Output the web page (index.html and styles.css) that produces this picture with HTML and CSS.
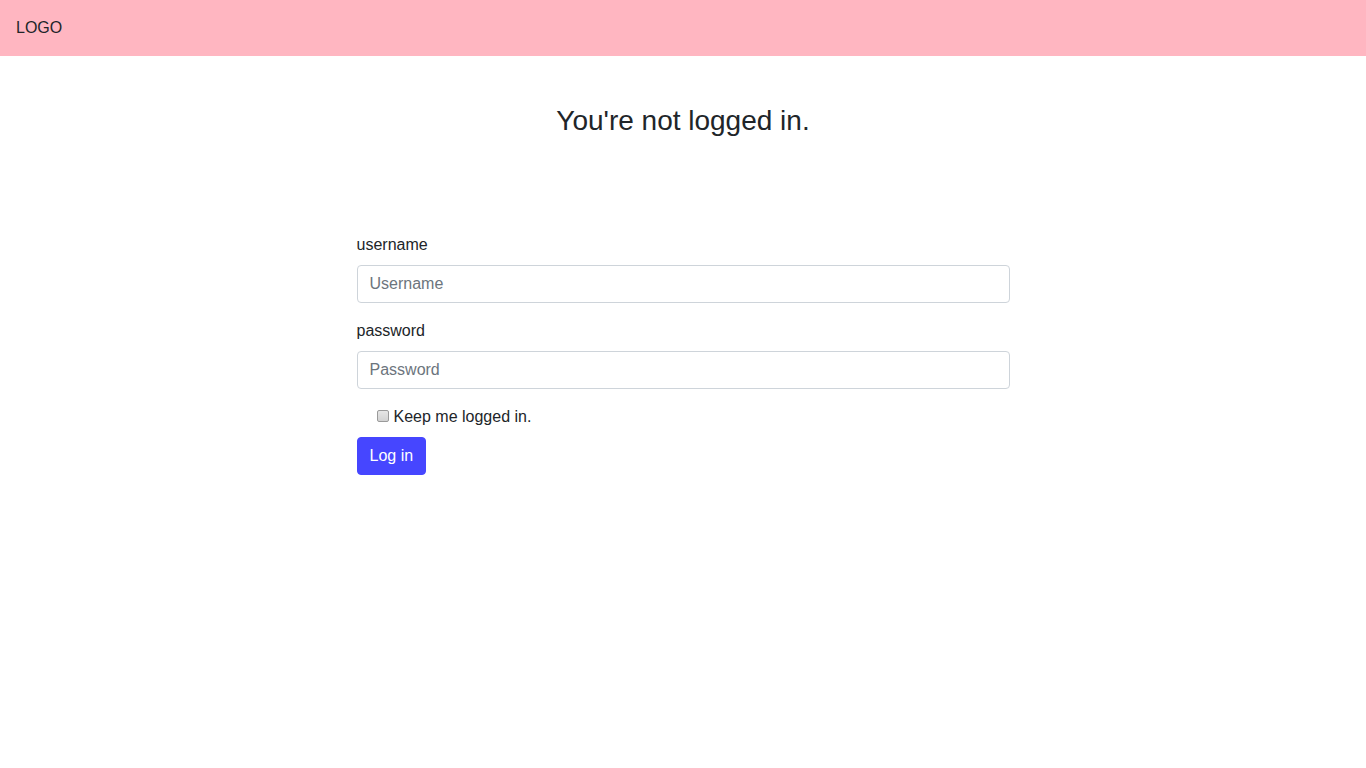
FILE: index.html
```html
<!DOCTYPE html>
<html lang="en">
<head>
<meta charset="utf-8">
<title>Login</title>
<link rel="stylesheet" href="styles.css">
</head>
<body>
<header class="navbar">
  <span class="brand">LOGO</span>
</header>
<main class="page">
  <h3 class="title">You're not logged in.</h3>
  <form class="login-form">
    <div class="form-group">
      <label class="field-label" for="username">username</label>
      <input class="form-control" id="username" type="text" placeholder="Username">
    </div>
    <div class="form-group">
      <label class="field-label" for="password">password</label>
      <input class="form-control" id="password" type="password" placeholder="Password">
    </div>
    <div class="form-check">
      <input class="check" id="keep" type="checkbox">
      <label class="check-label" for="keep">Keep me logged in.</label>
    </div>
    <button class="btn" type="submit">Log in</button>
  </form>
</main>
</body>
</html>
```

FILE: styles.css
```css
* { box-sizing: border-box; }
html, body { margin: 0; padding: 0; }
body {
  font-family: "Liberation Sans", Arial, sans-serif;
  font-size: 16px;
  line-height: 1.5;
  color: #212529;
  background: #fff;
}
.navbar {
  height: 56px;
  background: #ffb6c1;
  display: flex;
  align-items: center;
  padding: 0 16px;
}
.brand {
  font-size: 16px;
  color: #212529;
}
.page {
  display: flex;
  flex-direction: column;
  align-items: center;
}
.title {
  margin: 48px 0 95px;
  font-size: 28px;
  font-weight: 400;
  line-height: 1.2;
  text-align: center;
}
.login-form {
  width: 653px;
}
.form-group {
  margin-bottom: 16px;
}
.field-label {
  display: block;
  margin-bottom: 8px;
}
.form-control {
  display: block;
  width: 100%;
  height: 38px;
  padding: 6px 12px;
  font-family: inherit;
  font-size: 16px;
  line-height: 1.5;
  color: #495057;
  background: #fff;
  border: 1px solid #ced4da;
  border-radius: 4px;
  outline: none;
}
.form-control::placeholder {
  color: #6c757d;
  opacity: 1;
}
.form-check {
  display: flex;
  align-items: center;
  padding-left: 20px;
  margin-bottom: 8px;
  height: 24px;
}
.check {
  -webkit-appearance: none;
  appearance: none;
  width: 12px;
  height: 12px;
  margin: 0 5px 2px 0;
  border: 1px solid #9a9a9a;
  border-radius: 2px;
  background: linear-gradient(#e6e6e6, #d2d2d2);
}
.check-label {
  line-height: 24px;
}
.btn {
  display: inline-block;
  height: 38px;
  padding: 6px 12px;
  font-family: inherit;
  font-size: 16px;
  line-height: 1.5;
  color: #fff;
  background: #4646ff;
  border: 1px solid #4646ff;
  border-radius: 4px;
  cursor: pointer;
}
```
